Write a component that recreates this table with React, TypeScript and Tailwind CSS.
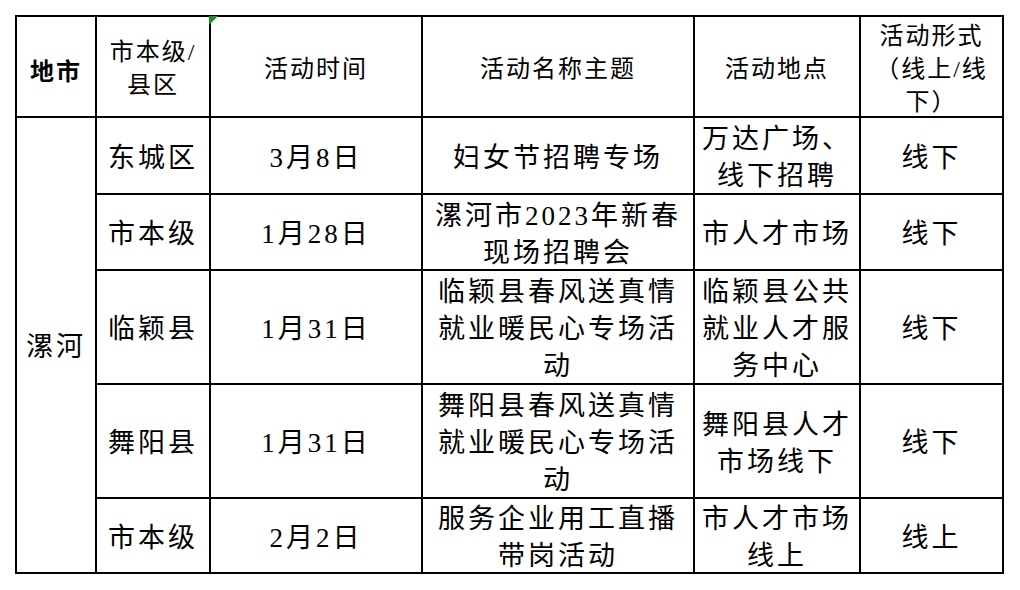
import React from "react";

type Cell = { lines: string[]; bold?: boolean; header?: boolean };

const FONT = "font-['Liberation_Serif','Noto_Sans_CJK_SC',serif]";

function CellBox({ c, extra = "" }: { c: Cell; extra?: string }) {
  const size = c.header
    ? "text-[24px] leading-[33px] tracking-[2px] pt-[5px]"
    : "text-[27px] leading-[37px] tracking-[3px] pt-[5px]";
  return (
    <div
      className={`bg-white flex flex-col items-center justify-center text-center text-black ${size} ${
        c.bold ? "font-bold font-['Noto_Sans_CJK_SC',sans-serif]" : ""
      } ${extra}`}
    >
      {c.lines.map((l, i) => (
        <div key={i} className="whitespace-nowrap">
          {l}
        </div>
      ))}
    </div>
  );
}

const rows: string[][][] = [
  [["东城区"], ["3月8日"], ["妇女节招聘专场"], ["万达广场、", "线下招聘"], ["线下"]],
  [["市本级"], ["1月28日"], ["漯河市2023年新春", "现场招聘会"], ["市人才市场"], ["线下"]],
  [
    ["临颖县"],
    ["1月31日"],
    ["临颖县春风送真情", "就业暖民心专场活", "动"],
    ["临颖县公共", "就业人才服", "务中心"],
    ["线下"],
  ],
  [
    ["舞阳县"],
    ["1月31日"],
    ["舞阳县春风送真情", "就业暖民心专场活", "动"],
    ["舞阳县人才", "市场线下"],
    ["线下"],
  ],
  [["市本级"], ["2月2日"], ["服务企业用工直播", "带岗活动"], ["市人才市场", "线上"], ["线上"]],
];

export default function App() {
  return (
    <div className={`w-[1020px] h-[590px] bg-white ${FONT}`}>
      <div className="pt-[15px] pl-[15px]">
        <div className="grid w-fit bg-black p-[2px] gap-[2px] grid-cols-[78px_112px_210px_270px_164px_141px] grid-rows-[99px_75px_74px_112px_112px_73px]">
          <CellBox c={{ lines: ["地市"], header: true, bold: true }} />
          <CellBox c={{ lines: ["市本级/", "县区"], header: true }} />
          <div className="relative bg-white flex items-center justify-center pt-[5px] text-[24px] leading-[33px] tracking-[2px] text-black">
            <svg
              className="absolute left-[-2px] top-[-1px]"
              width="9"
              height="9"
              viewBox="0 0 9 9"
            >
              <polygon points="0,0 9,0 0,9" fill="#1f8a1f" />
            </svg>
            活动时间
          </div>
          <CellBox c={{ lines: ["活动名称主题"], header: true }} />
          <CellBox c={{ lines: ["活动地点"], header: true }} />
          <CellBox c={{ lines: ["活动形式", "（线上/线", "下）"], header: true }} />

          <CellBox c={{ lines: ["漯河"] }} extra="row-span-5" />
          {rows.map((r, ri) =>
            r.map((lines, ci) => <CellBox key={`${ri}-${ci}`} c={{ lines }} />)
          )}
        </div>
      </div>
    </div>
  );
}
